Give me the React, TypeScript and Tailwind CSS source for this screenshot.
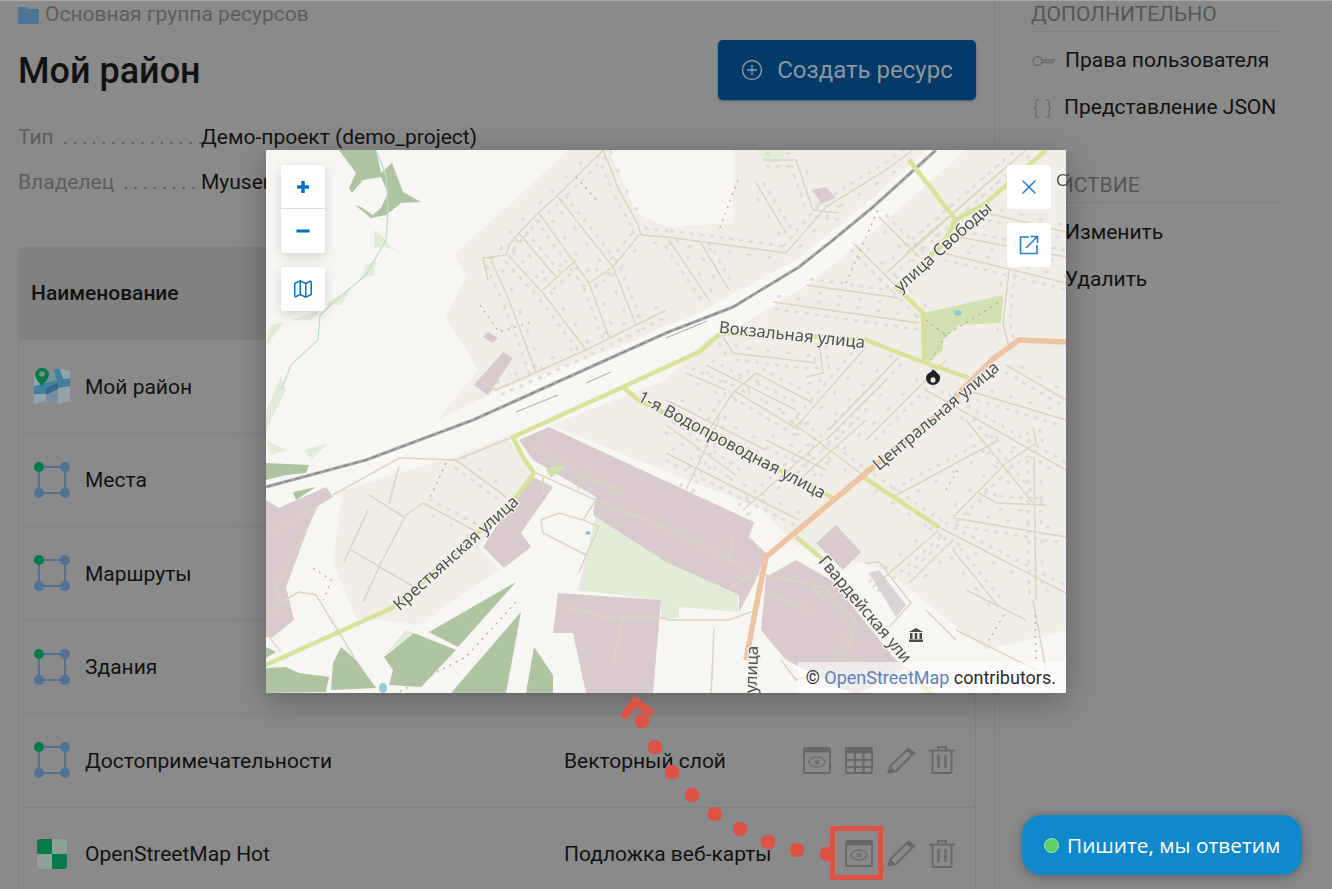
import React from 'react';
import { Map as MapIcon, X, Braces } from 'lucide-react';

type Line = number[];

const streets: Line[] = [
  [337,0,290,47,272,63,253,83,243,95,240,105],[337,0,353,40,372,75,375,85],[375,85,400,87,520,103],
  [225,110,243,150,270,222],[292,47,347,117,370,175],[273,63,323,133,343,187],[253,83,290,127],
  [242,105,277,143,320,200],[347,117,323,133],[373,85,347,117],[310,110,277,140],[230,240,320,200,370,175,400,160],
  [520,103,560,57,620,20,647,0],[497,10,530,10,547,60,573,63],[490,33,520,83],[403,90,443,150],[435,93,463,140],
  [587,93,657,163],[613,67,653,107],[507,152,653,173],[540,135,633,148],[620,123,740,17],[640,103,760,0],
  [677,103,800,133],[693,87,800,107],[720,63,800,82],[743,120,737,173,743,197],[457,187,467,203,550,213],
  [553,193,557,223,540,227],[600,197,530,277],[633,207,563,280],[490,223,467,243,443,280],[490,223,547,253],
  [467,240,533,280],[420,223,460,240],[400,303,533,370],[453,270,420,340],[557,290,477,360],[523,270,593,322,673,377,800,443],
  [600,270,533,330],[767,277,770,293,740,313,687,367],[733,290,627,347],[700,270,767,353],[687,368,800,387],
  [713,343,730,353,780,355],[768,307,770,450],[673,380,607,437],[687,390,643,433],[687,400,733,457],
  [700,240,800,270],[660,240,800,320],[620,230,560,290],[680,210,600,290],[740,215,800,250],[440,215,530,260],[400,250,500,300],
  [400,275,470,325],[500,290,560,320],[157,353,213,383],[190,310,240,347],
];
const minor: Line[] = [
  [230,240,217,232],[67,345,133,308,190,310,240,347],[190,310,247,287],[133,317,123,353],[103,345,138,367],[102,360,78,412],
  [157,353,140,365,115,413,97,452],[85,400,150,438],[52,355,17,427,7,433,15,452,0,467],[0,387,50,357],
  [15,452,33,442,50,445,88,507],[0,483,15,502],[270,287,277,303,320,327,358,340,350,347,343,337],
  [270,323,330,350,317,370,333,377,320,405,277,383,275,370,293,363,317,370],[320,405,313,423],[330,350,397,377,387,378],
  [300,457,340,467,357,467,347,515],[357,467,400,468],[325,313,313,327,312,340],[277,327,278,345],
  [400,377,490,423,570,440],[468,383,463,413],[463,437,490,423],[500,443,547,462],[546,437,556,450,573,443],[573,457,587,487,577,510],
  [400,470,463,470,490,460],[448,477,445,550],[600,413,613,412,645,453,623,477],[228,108,217,108,222,130],[240,105,217,108],
  [660,460,690,490],[700,440,760,470],[767,450,780,520],[690,480,770,520],[560,440,590,470,570,510],[515,510,530,530,590,510,600,520],
];
const dashed: Line[] = [
  [310,27,333,53],[472,30,453,80],[580,133,613,57],[250,452,200,507,133,542],[180,313,163,350],[47,418,65,430,58,450],
  [214,155,233,182,266,172],[660,170,680,185,737,150],[680,185,665,210],[738,465,720,495],[769,465,770,510],[680,340,692,320],
];
const industrial = [
  '253,290 283,277 488,372 483,387 500,403 490,430 473,462 473,445 400,412 327,365 330,347 267,310',
  '500,427 530,410 565,430 630,510 640,518 590,545 520,510 495,480','287,483 292,443 395,450 387,543 320,543 307,483',
  '267,327 287,337 255,383 265,397 238,418 217,397 247,350','0,350 13,358 60,337 67,347 50,357 20,437 28,470 7,487 0,487',
  '237,202 247,208 222,245 208,235','222,182 232,188 227,193 217,187','550,393 570,375 595,402 577,420','547,40 560,37 570,48 555,54',
];
const forest = [
  '73,0 110,0 115,23 126,13 137,42 155,52 135,53 120,65 105,68 89,55 95,57 107,65 115,58 122,43 115,27 97,30 86,43 83,38 90,23',
  '163,482 250,432 192,497','118,507 148,483 190,500 155,537 123,535 127,520','185,543 255,462 240,543','260,543 268,497 287,525 287,543',
  '75,497 90,510 110,538 65,540 67,513','0,518 20,517 33,523 63,527 60,542 0,543','0,497 10,502 0,508',
  '0,313 43,315 40,323 20,325 0,330','27,342 50,337 30,350',
];
const pale = [
  '330,365 400,412 472,445 472,462 413,457 413,467 395,470 395,450 312,440 318,415','118,505 140,480 148,483','108,80 115,85 125,97 140,105 120,97 108,98',
  '100,115 110,112 108,125 95,128','65,150 85,140 75,155 60,155','5,175 18,172 5,190 0,195','25,170 55,160 45,170','38,300 62,293 45,310','0,290 20,300 5,305','15,225 20,240 5,270 0,280 0,262','490,0 520,0 515,12 498,12',
];

function dist(a: number, b: number, c: number, d: number) {
  return Math.hypot(c - a, d - b);
}

function Buildings() {
  const out: React.ReactNode[] = [];
  let n = 0;
  streets.forEach((l, li) => {
    for (let i = 0; i + 3 < l.length; i += 2) {
      const [a, b, c, d] = [l[i], l[i + 1], l[i + 2], l[i + 3]];
      const len = dist(a, b, c, d);
      const ux = (c - a) / len;
      const uy = (d - b) / len;
      const ang = (Math.atan2(uy, ux) * 180) / Math.PI;
      for (let s = 5; s < len; s += 10) {
        [-1, 1].forEach((side) => {
          n += 1;
          if ((n * 7 + li) % 4 === 0) return;
          const x = a + ux * s - uy * 6.5 * side;
          const y = b + uy * s + ux * 6.5 * side;
          out.push(<rect key={n} x={-2} y={-1.4} width={4} height={2.8} fill="#dfdcdc" transform={`translate(${x.toFixed(1)} ${y.toFixed(1)}) rotate(${ang.toFixed(0)})`} />);
        });
      }
    }
  });
  return <g>{out}</g>;
}

function MapLabel({ x, y, a, t, anchor = 'middle' }: { x: number; y: number; a: number; t: string; anchor?: 'middle' | 'start' }) {
  return (
    <text x={0} y={5.5} textAnchor={anchor} transform={`translate(${x} ${y}) rotate(${a})`} fill="#505050" stroke="#f3f2ec" strokeWidth={2.5} paintOrder="stroke" fontSize={16.7} fontFamily="'Noto Sans', sans-serif">
      {t}
    </text>
  );
}

function OsmMap() {
  const pts = (l: Line) => l.join(' ');
  return (
    <svg viewBox="0 0 800 543" className="absolute inset-0 block h-full w-full blur-[0.6px]">
      <rect width="800" height="543" fill="#f7f6f2" />
      <polygon points="303,0 188,105 200,127 180,167 212,220 172,270 232,240 400,180 530,110 670,0 467,0 467,73 400,77 370,63 343,0" fill="#f0eee6" />
      <polygon points="285,275 400,230 470,160 535,130 600,80 700,0 800,0 800,480 720,500 620,420 530,395 497,360" fill="#f0eee6" />
      <polygon points="67,413 77,340 187,307 240,287 267,320 213,397 233,420 153,475 90,467" fill="#f0eee6" />
      {pale.map((p) => <polygon key={p} points={p} fill="#e3ecd8" />)}
      <path d="M0 345 100 318 207 278 400 190 467 165 533 125 567 98 607 65 680 0" fill="none" stroke="#f8f7f3" strokeWidth={26} />
      <Buildings />
      {industrial.map((p) => <polygon key={p} points={p} fill="#d9cacd" />)}
      <polygon points="603,423 613,420 640,455 630,467" fill="#d8d4d8" />
      {forest.map((p) => <polygon key={p} points={p} fill="#afc4a0" />)}
      <polygon points="658,163 737,145 735,173 693,175 677,190 677,200 663,212 658,207" fill="#d2e1b0" />
      <polygon points="280,320 290,315 300,317 285,328" fill="#d2e1b0" />
      <ellipse cx="692" cy="163" rx="4" ry="2.5" fill="#86cdd6" />
      <ellipse cx="322" cy="383" rx="2.5" ry="2" fill="#86cdd6" />
      <ellipse cx="117" cy="538" rx="4" ry="5" fill="#8fd0d8" />
      <path d="M110 0 120 25 122 60 120 90 100 125 70 150 54 165 52 190 25 215 15 240" fill="none" stroke="#bcdcd2" strokeWidth={1.2} />
      {minor.concat(streets).map((l, i) => <polyline key={i} points={pts(l)} fill="none" stroke="#dad6bf" strokeWidth={1.5} />)}
      {dashed.map((l, i) => <polyline key={i} points={pts(l)} fill="none" stroke="#c9a99b" strokeWidth={1.4} strokeDasharray="2 5" />)}
      <path d="M0 337 100 310 207 270 400 183 467 157 533 117 567 90 607 57 670 0" fill="none" stroke="#a8a8a8" strokeWidth={3.2} />
      <path d="M0 337 100 310 207 270 400 183 467 157 533 117 567 90 607 57 670 0" fill="none" stroke="#7c7c7c" strokeWidth={1} strokeDasharray="6 4" />
      <path d="M250 262 292 245M320 233 345 222M400 188 441 171" fill="none" stroke="#a8a8a8" strokeWidth={1} />
      <g fill="none" stroke="#d9e29a" strokeWidth={4.5}>
        <path d="M0 515 128 457 190 403 248 350 268 323 257 307 247 287 357 237 400 217 433 202 455 183 525 185 600 190 633 203 660 213 703 228" />
        <path d="M357 237 372 250 465 295 567 348" />
        <path d="M643 10 690 70 676 95 630 137 657 163 658 213" />
        <path d="M690 70 720 53 780 0" />
        <path d="M597 327 673 377" /><path d="M530 387 560 412" /><path d="M640 520 665 543" />
      </g>
      <path d="M800 192 753 190 728 208 670 266 607 317 500 407 490 457 480 510" fill="none" stroke="#eec3a1" strokeWidth={5.5} />
      <path d="M800 192 753 190 728 208 670 266 607 317 500 407 490 457 480 510" fill="none" stroke="#f5dcc6" strokeWidth={0.8} strokeDasharray="1 6" />
      <MapLabel x={526} y={185} a={6} t="Вокзальная улица" />
      <MapLabel x={677} y={97} a={-42} t="улица Свободы" />
      <MapLabel x={670} y={266} a={-40} t="Центральная улица" />
      <MapLabel x={466} y={295} a={28} t="1-я Водопроводная улица" />
      <MapLabel x={190} y={403} a={-42} t="Крестьянская улица" />
      <MapLabel x={556} y={408} a={50} t="Гвардейская ули" anchor="start" />
      <MapLabel x={485} y={543} a={-88} t="улица" anchor="start" />
      <MapLabel x={790} y={30} a={0} t="С" anchor="start" />
      <path d="M667 219c1 2 3 2 4 4 2 1 3 3 3 5a7 7 0 0 1-14 0c0-2 1-4 3-5 2-1 3-2 4-4Z" fill="#222" />
      <ellipse cx="667" cy="230" rx="2.5" ry="2.800" fill="#eeeae0" />
      <g fill="#4a4a4a" transform="translate(643 478)">
        <path d="M7 0 14 4H0Z" /><rect x="1" y="5" width="2.5" height="6" /><rect x="5.7" y="5" width="2.5" height="6" /><rect x="10.5" y="5" width="2.5" height="6" /><rect x="0" y="11.5" width="14" height="2.5" />
      </g>
    </svg>
  );
}

function CtlBtn({ children, className = '' }: { children: React.ReactNode; className?: string }) {
  return <div className={`flex h-[44px] w-[44px] items-center justify-center bg-white text-[#0070c5] ${className}`}>{children}</div>;
}

function ModalMap() {
  return (
    <div className="absolute left-[266px] top-[150px] h-[543px] w-[800px] overflow-hidden shadow-[0_8px_30px_rgba(0,0,0,0.3)]">
      <OsmMap />
      <div className="absolute left-[15px] top-[15px] flex flex-col gap-[14px]">
        <div className="overflow-hidden rounded-[3px] shadow-[0_3px_12px_rgba(0,0,0,0.15)]">
          <CtlBtn className="border-b border-[#dedede]">
            <svg width="14" height="14" viewBox="0 0 14 14" fill="#0070c5"><rect x="5.3" y="1" width="3.4" height="12" /><rect x="1" y="5.3" width="12" height="3.4" /></svg>
          </CtlBtn>
          <CtlBtn>
            <svg width="14" height="14" viewBox="0 0 14 14" fill="#0070c5"><rect x="0.5" y="5.5" width="13" height="3" /></svg>
          </CtlBtn>
        </div>
        <CtlBtn className="rounded-[3px] shadow-[0_3px_12px_rgba(0,0,0,0.15)]"><MapIcon size={22} strokeWidth={1.6} /></CtlBtn>
      </div>
      <div className="absolute right-[15px] top-[15px] flex flex-col gap-[14px]">
        <CtlBtn className="rounded-[3px]"><X size={24} strokeWidth={1.6} className="text-[#2583d3]" /></CtlBtn>
        <CtlBtn className="rounded-[3px]">
          <svg width="20" height="20" viewBox="0 0 20 20" fill="none" stroke="#2583d3" strokeWidth="1.6"><path d="M10 2H1.5v16.5H18V10" /><path d="M7 13 18 2M11.5 1.5H18.5V8" /></svg>
        </CtlBtn>
      </div>
      <div className="absolute bottom-0 right-0 flex h-[31px] w-[268px] items-center justify-end bg-white/60 pr-[10px] font-['Roboto',sans-serif] text-[18px] leading-none text-[#2b2b2b]">
        <span>© <span className="text-[#5b84bd]">OpenStreetMap</span> contributors.</span>
      </div>
    </div>
  );
}

function PreviewIcon() {
  return (
    <svg width="28" height="27" viewBox="0 0 28 27" fill="none">
      <rect x="1" y="1" width="26" height="25" rx="1.5" stroke="#686868" strokeWidth="2" />
      <rect x="1" y="1" width="26" height="4.5" fill="#686868" />
      <path d="M5.5 15c2-3.500 5-5 8.500-5s6.500 1.500 8.500 5c-2 3.500-5 5-8.500 5s-6.500-1.500-8.500-5Z" stroke="#707070" strokeWidth="1.6" />
      <circle cx="14" cy="15" r="2.600" fill="#707070" />
    </svg>
  );
}
function TableIcon() {
  return (
    <svg width="28" height="27" viewBox="0 0 28 27" fill="none" stroke="#686868" strokeWidth="2">
      <rect x="1" y="1" width="26" height="25" rx="1.5" />
      <rect x="1" y="1" width="26" height="4.500" fill="#686868" />
      <path d="M1 13h26M1 20h26M10 6v20M18.500 6v20" />
    </svg>
  );
}
function PencilIcon() {
  return (
    <svg width="28" height="27" viewBox="0 0 28 27" fill="none">
      <path d="M1.500 25.500 3.500 19 21.500 1.500 27 6 9 24Z" fill="none" stroke="#686868" strokeWidth="2" />
      <path d="M21.500 1.500 27 6 24.500 8.500 19 4Z" fill="#686868" />
      <path d="M1.500 25.500 3.500 19 8.500 24Z" fill="#686868" />
    </svg>
  );
}
function TrashIcon() {
  return (
    <svg width="26" height="28" viewBox="0 0 26 28" fill="none" stroke="#686868" strokeWidth="2">
      <path d="M0 4.500h26M9 4V1h8v3" />
      <path d="M3.500 5v21a1 1 0 0 0 1 1h17a1 1 0 0 0 1-1V5" />
      <path d="M9.500 9v13M16.500 9v13" strokeWidth="2.500" />
    </svg>
  );
}

function LayerIcon() {
  return (
    <svg width="36" height="36" viewBox="0 0 36 36">
      <path d="M0 5 12 2v31L0 36Z" fill="#94a2ab" />
      <path d="M12 2 24 5v31l-12-3Z" fill="#7b8e9b" />
      <path d="M24 0 36 3v30l-12 3Z" fill="#94a2ab" />
      <path d="M0 18 12 15l12-3 12-2v8l-12 2-12 6-12 0Z" fill="#42809f" />
      <path d="M12 20 24 15v6L12 27Z" fill="#39678a" />
      <path d="M25 0 31 15l-6 4-5-17Z" fill="#42809f" />
      <path d="M8 0C4 0 1 3 1 6.500 1 11 8 18 8 18s7-7 7-11.500C15 3 12 0 8 0Z" fill="#067a4b" />
      <circle cx="8" cy="6" r="2.800" fill="#8a8a8a" />
    </svg>
  );
}
function VectorIcon() {
  return (
    <svg width="36" height="36" viewBox="0 0 36 36">
      <path d="M5 5h26v26H5Z" fill="none" stroke="#4e7195" strokeWidth="1.800" />
      <circle cx="5" cy="5" r="5" fill="#067a4b" />
      <circle cx="31" cy="5" r="5" fill="#4e7195" />
      <circle cx="5" cy="31" r="5" fill="#4e7195" />
      <circle cx="31" cy="31" r="5" fill="#4e7195" />
    </svg>
  );
}
function BasemapIcon() {
  return (
    <svg width="30" height="30" viewBox="0 0 30 30" className="ml-[3px]">
      <path d="M3 0h12v15H0V3a3 3 0 0 1 3-3Z" fill="#067a4b" />
      <path d="M15 0h12a3 3 0 0 1 3 3v12H15Z" fill="#8ca296" />
      <path d="M0 15h15v15H3a3 3 0 0 1-3-3Z" fill="#8ca296" />
      <path d="M15 15h15v12a3 3 0 0 1-3 3H15Z" fill="#067a4b" />
    </svg>
  );
}

const rows: { n: string; t: string; icon: React.ReactNode; table?: boolean; preview?: boolean }[] = [
  { n: 'Мой район', t: 'Веб-карта', icon: <LayerIcon />, preview: true },
  { n: 'Места', t: 'Векторный слой', icon: <VectorIcon />, preview: true, table: true },
  { n: 'Маршруты', t: 'Векторный слой', icon: <VectorIcon />, preview: true, table: true },
  { n: 'Здания', t: 'Векторный слой', icon: <VectorIcon />, preview: true, table: true },
  { n: 'Достопримечательности', t: 'Векторный слой', icon: <VectorIcon />, preview: true, table: true },
  { n: 'OpenStreetMap Hot', t: 'Подложка веб-карты', icon: <BasemapIcon />, preview: true },
];

function MetaRow({ label, dots, value, className }: { label: string; dots: number; value: string; className: string }) {
  return (
    <div className={`flex h-[30px] items-center ${className}`}>
      <div className="w-[183px] shrink-0 whitespace-nowrap">
        <span className="text-[#5d5d5d]">{label}</span>
        <span className="ml-[9px] tracking-[4.1px] text-[#5c5c5c]">{'.'.repeat(dots)}</span>
      </div>
      <span>{value}</span>
    </div>
  );
}

function Annotation() {
  const dots = [[642,721],[655,747],[672,772],[692,795],[715,814],[740,829],[768,842],[797,850],[827,854]];
  return (
    <svg className="pointer-events-none absolute inset-0" width="1332" height="889" viewBox="0 0 1332 889">
      {dots.map(([x, y]) => <circle key={x} cx={x} cy={y} r="7.300" fill="#dc5346" />)}
      <path d="M625 715 635 701 650 712" fill="none" stroke="#dc5346" strokeWidth="8" strokeLinecap="round" strokeLinejoin="round" />
      <rect x="832.500" y="828.500" width="48" height="49" fill="none" stroke="#dc5346" strokeWidth="5" />
    </svg>
  );
}

export default function App() {
  return (
    <div className="relative flex h-[889px] w-full overflow-hidden bg-[#8a8a8a] font-['Roboto',sans-serif] text-[21px] text-[#121212]">
      <div className="absolute inset-x-0 top-0 h-px bg-[#a9a9a9]" />
      <main className="w-[995px] shrink-0 border-r border-[#828282] px-[18px]">
        <div className="flex h-[28px] items-center gap-[6px] pt-[1px] text-[#5d5d5d]">
          <svg width="21" height="18" viewBox="0 0 21 18"><path d="M0 1h8l2 2h11v15H0Z" fill="#4c7596" /></svg>
          <span>Основная группа ресурсов</span>
        </div>
        <div className="mt-[12px] flex items-start justify-between">
          <h1 className="mt-[11px] text-[36px] font-medium leading-[40px]">Мой район</h1>
          <div className="flex h-[60px] w-[258px] items-center justify-center gap-[14px] rounded-[5px] bg-[#033a69] text-[24px] text-[#8e969d] shadow-[0_1px_2px_rgba(0,60,110,0.5)]">
            <svg width="22" height="22" viewBox="0 0 22 22" fill="none" stroke="#8e969d" strokeWidth="1.400"><circle cx="11" cy="11" r="9.500" /><path d="M11 6v10M6 11h10" /></svg>
            <span>Создать ресурс</span>
          </div>
        </div>
        <MetaRow label="Тип" dots={15} value="Демо-проект (demo_project)" className="mt-[23px]" />
        <MetaRow label="Владелец" dots={8} value="Myuser" className="mt-[15px]" />
        <section className="mt-[49px] rounded-t-[6px] border-x border-[#828282]">
          <div className="flex h-[93px] items-center rounded-t-[6px] bg-[#818181] pl-[12px] font-medium">Наименование</div>
          {rows.map((r) => (
            <div key={r.n} className="flex h-[93.500px] items-center border-b border-[#828282]">
              <div className="flex h-full w-[533px] shrink-0 items-center gap-[15px] pl-[15px]">
                {r.icon}
                <span className={r.n.startsWith('Open') ? 'ml-[3px] pt-[2px]' : 'pt-[2px]'}>{r.n}</span>
              </div>
              <div className="flex-1 pl-[12px] pt-[2px]">{r.t}</div>
              <div className="flex items-center gap-[14px] pr-[20px]">
                {r.preview && <PreviewIcon />}
                {r.table && <TableIcon />}
                <PencilIcon />
                <TrashIcon />
              </div>
            </div>
          ))}
        </section>
      </main>
      <aside className="w-[293px] pl-[36px] pr-[8px] pt-[1px]">
        <div className="flex h-[31px] items-center border-b border-[#808080] pb-[3px] text-[#565656]">ДОПОЛНИТЕЛЬНО</div>
        <div className="mt-[14px] flex h-[30px] items-center gap-[10px]">
          <svg width="23" height="12" viewBox="0 0 23 12" fill="none" stroke="#6a6a6a" strokeWidth="1.400" className="ml-[1px]"><circle cx="5.500" cy="6" r="4.500" /><path d="M10 5h12l-1.500 2.500h-2l-1-1-1 1h-2l-1-1-1 1H10" /></svg>
          <span>Права пользователя</span>
        </div>
        <div className="mt-[17px] flex h-[30px] items-center gap-[10px]"><Braces size={23} strokeWidth={1.300} className="text-[#6a6a6a]" /><span>Представление JSON</span></div>
        <div className="mt-[47px] flex h-[33px] items-center border-b border-[#808080] pb-[1px] text-[#565656]">ДЕЙСТВИЕ</div>
        <div className="mt-[15px] flex h-[30px] items-center pl-[34px]">Изменить</div>
        <div className="mt-[17px] flex h-[30px] items-center pl-[34px]">Удалить</div>
      </aside>
      <ModalMap />
      <Annotation />
      <div className="absolute left-[1022px] top-[815px] flex h-[60px] w-[280px] items-center gap-[8px] rounded-[20px] bg-[#0f89cc] pl-[22px] pt-[1px] font-['Open_Sans',sans-serif] text-[20.800px] text-white shadow-[0_2px_12px_rgba(0,0,0,0.3)]">
        <span className="h-[15px] w-[15px] rounded-full border border-[#a9e3b8] bg-[#5ad166]" />
        <span>Пишите, мы ответим</span>
      </div>
    </div>
  );
}
